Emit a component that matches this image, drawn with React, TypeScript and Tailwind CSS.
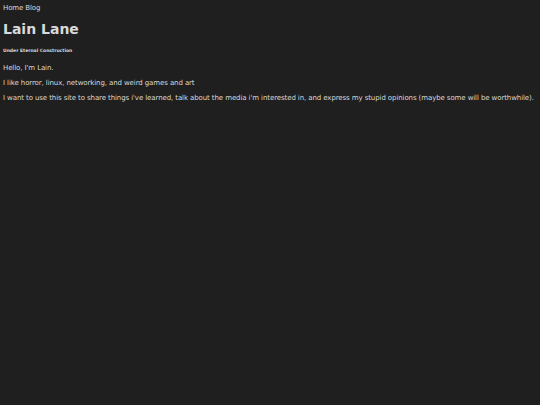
export default function App() {
  return (
    <div className="min-h-screen bg-[#1f1f1f] text-[#d9d9d9] px-[3px] pt-[4px] font-['DejaVu_Sans',sans-serif] text-[7px] leading-[8px] tracking-[-0.1px]">
      <nav className="flex gap-[2px]">
        <a>Home</a>
        <a>Blog</a>
      </nav>
      <h1 className="mt-[9px] text-[14px] leading-[17px] font-bold tracking-normal">Lain Lane</h1>
      <h6 className="mt-[10px] text-[4.5px] leading-[5px] font-bold tracking-normal">Under Eternal Construction</h6>
      <p className="mt-[11px]">Hello, I'm Lain.</p>
      <p className="mt-[7px]">I like horror, linux, networking, and weird games and art</p>
      <p className="mt-[7px] whitespace-nowrap">
        I want to use this site to share things i've learned, talk about the media i'm interested in, and express my stupid opinions (maybe some will be worthwhile).
      </p>
    </div>
  );
}
